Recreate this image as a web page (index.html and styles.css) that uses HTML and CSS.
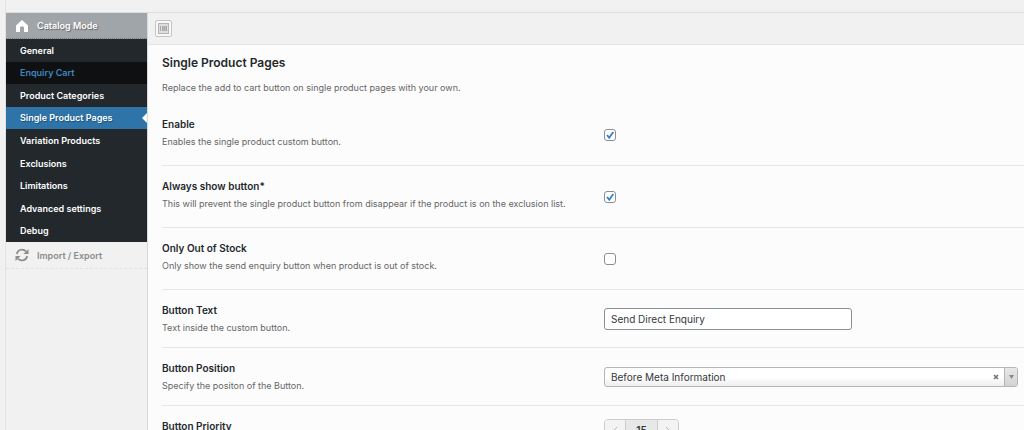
FILE: index.html
```html
<!DOCTYPE html>
<html lang="en">
<head>
  <meta charset="UTF-8" />
  <meta name="viewport" content="width=device-width, initial-scale=1" />
  <title>Catalog Mode - Single Product Pages</title>
  <link rel="stylesheet" href="styles.css">
</head>
<body>
  <div class="panel">
    <nav class="sidebar">
      <a href="#catalog" class="menu-head">
        <svg class="icon" viewBox="0 0 14 14" aria-hidden="true">
          <path fill="currentColor" d="M7 1 13 6.5V13H9V8.5Q9 7.5 8 7.5H6Q5 7.5 5 8.5V13H1V6.5Z" />
        </svg>
        <span>Catalog Mode</span>
      </a>
      <ul class="submenu">
        <li><a href="#general">General</a></li>
        <li><a href="#enquiry" class="hovered">Enquiry Cart</a></li>
        <li><a href="#categories">Product Categories</a></li>
        <li><a href="#single" class="current">Single Product Pages</a></li>
        <li><a href="#variation">Variation Products</a></li>
        <li><a href="#exclusions">Exclusions</a></li>
        <li><a href="#limitations">Limitations</a></li>
        <li><a href="#advanced">Advanced settings</a></li>
        <li><a href="#debug">Debug</a></li>
      </ul>
      <a href="#import" class="menu-import">
        <svg class="icon" viewBox="0 0 14 14" aria-hidden="true">
          <path fill="none" stroke="currentColor" stroke-width="1.7" d="M1.8 6A5.3 5.3 0 0 1 11 3.4M12.2 8A5.3 5.3 0 0 1 3 10.6" />
          <path fill="currentColor" d="M13.5 1V6H8.5ZM.5 13V8H5.5Z" />
        </svg>
        <span>Import / Export</span>
      </a>
    </nav>

    <main class="main">
      <div class="toolbar">
        <button type="button" class="expand" aria-label="Expand options">
          <svg viewBox="0 0 11 11" aria-hidden="true">
            <rect x=".5" y=".5" width="10" height="10" fill="#ddd" stroke="#b5b5b5" />
            <path d="M2 3h1v5H2zM4 3h5v5H4z" fill="#aaa" />
            <path d="M5.5 3v5M7.5 3v5" stroke="#bbb" />
          </svg>
        </button>
      </div>

      <form class="options">
        <h2>Single Product Pages</h2>
        <p class="intro">Replace the add to cart button on single product pages with your own.</p>

        <div class="row row-check">
          <div class="info">
            <label for="enable">Enable</label>
            <p>Enables the single product custom button.</p>
          </div>
          <div class="field"><input type="checkbox" id="enable" checked /></div>
        </div>

        <div class="row row-check">
          <div class="info">
            <label for="always">Always show button*</label>
            <p>This will prevent the single product button from disappear if the product is on the exclusion list.</p>
          </div>
          <div class="field"><input type="checkbox" id="always" checked /></div>
        </div>

        <div class="row row-check">
          <div class="info">
            <label for="stock">Only Out of Stock</label>
            <p>Only show the send enquiry button when product is out of stock.</p>
          </div>
          <div class="field"><input type="checkbox" id="stock" /></div>
        </div>

        <div class="row">
          <div class="info">
            <label for="text">Button Text</label>
            <p>Text inside the custom button.</p>
          </div>
          <div class="field"><input type="text" id="text" value="Send Direct Enquiry" /></div>
        </div>

        <div class="row">
          <div class="info">
            <label for="position">Button Position</label>
            <p>Specify the positon of the Button.</p>
          </div>
          <div class="field">
            <div class="select">
              <select id="position">
                <option>Before Meta Information</option>
              </select>
              <button type="button" class="clear" aria-label="Clear">
                <svg viewBox="0 0 6 6" aria-hidden="true"><path d="M1 1 5 5M5 1 1 5" stroke="#777" stroke-width="1.7" /></svg>
              </button>
              <span class="arrow">
                <svg viewBox="0 0 5 4" aria-hidden="true"><path d="M0 0H5L2.5 4Z" fill="#888" /></svg>
              </span>
            </div>
          </div>
        </div>

        <div class="row">
          <div class="info">
            <label for="priority">Button Priority</label>
          </div>
          <div class="field field-top">
            <div class="spinner">
              <button type="button" aria-label="Decrease">
                <svg viewBox="0 0 6 8" aria-hidden="true"><path d="M5 1 2 4 5 7" fill="none" stroke="#bbb" /></svg>
              </button>
              <input type="text" id="priority" value="15" />
              <button type="button" aria-label="Increase">
                <svg viewBox="0 0 6 8" aria-hidden="true"><path d="M1 1 4 4 1 7" fill="none" stroke="#bbb" /></svg>
              </button>
            </div>
          </div>
        </div>
      </form>
    </main>
  </div>
</body>
</html>
```
FILE: styles.css
```css
* {
  box-sizing: border-box;
}

body {
  margin: 0;
  height: 100vh;
  overflow: hidden;
  padding-left: 5px;
  background: #f1f1f1;
  font-family: Inter, "Liberation Sans", sans-serif;
  font-size: 9px;
  color: #23282d;
}

.panel {
  display: flex;
  min-height: 100vh;
  padding-top: 12px;
  border-left: 1px solid #e2e2e2;
}

a {
  text-decoration: none;
}

/* Sidebar */
.sidebar {
  width: 141px;
  flex-shrink: 0;
  border-top: 1px solid #dedede;
}

.menu-head,
.menu-import {
  display: flex;
  align-items: center;
  gap: 8px;
  height: 27px;
  padding-left: 9px;
  font-weight: 600;
}

.menu-head {
  height: 26px;
  background: #a0a5aa;
  border-bottom: 1px dotted #777;
  color: #fff;
  text-shadow: 1px 1px 1px #666;
}

.menu-import {
  color: #8c8c8c;
  border-bottom: 1px dashed #e2e2e2;
}

.icon {
  width: 14px;
  height: 14px;
}

.submenu {
  display: grid;
  grid-auto-rows: 1fr;
  min-height: 203px;
  margin: 0;
  padding: 0;
  list-style: none;
  background: #23282d;
}

.submenu a {
  position: relative;
  display: flex;
  align-items: center;
  height: 100%;
  padding-left: 14px;
  color: #fff;
  font-weight: 600;
}

.submenu .hovered {
  background: #0e1012;
  color: #3f88c0;
}

.submenu .current {
  background: #2e74a9;
  text-shadow: 1px 1px 1px #1a4f78;
}

.submenu .current::after {
  content: "";
  position: absolute;
  right: 0;
  border: 5px solid transparent;
  border-left-width: 0;
  border-right-color: #fcfcfc;
}

/* Content */
.main {
  flex: 1;
  min-width: 0;
  background: #fcfcfc;
  border-top: 1px solid #dedede;
  border-left: 1px solid #d8d8d8;
}

.toolbar {
  display: flex;
  align-items: center;
  height: 32px;
  padding-left: 7px;
  background: #f1f1f1;
  border-bottom: 1px solid #e5e5e5;
}

.expand {
  display: flex;
  align-items: center;
  justify-content: center;
  width: 17px;
  height: 17px;
  padding: 0;
  background: #f8f8f8;
  border: 1px solid #c5c5c5;
  border-radius: 2px;
}

.expand svg {
  width: 11px;
  height: 11px;
}

.options {
  padding: 10px 0 0 14px;
}

h2 {
  margin: 0;
  font-size: 12px;
  line-height: 16px;
  font-weight: 600;
}

.intro {
  margin: 11px 0 10px;
  line-height: 12px;
  color: #666;
}

.row {
  display: grid;
  grid-template-columns: 442px 1fr;
  padding: 13px 0;
  border-bottom: 1px solid #e7e7e7;
}

.info label {
  display: block;
  font-size: 10px;
  line-height: 14px;
  font-weight: 600;
}

.info p {
  margin: 5px 0 0;
  line-height: 12px;
  color: #666;
}

.field {
  display: flex;
  align-items: center;
  height: 31px;
  padding-right: 6px;
}

.row-check .field {
  height: 35px;
}

.field-top {
  align-items: flex-start;
}

input,
select {
  font-family: inherit;
  font-size: 10px;
  color: #32373c;
}

input[type="checkbox"] {
  appearance: none;
  width: 12px;
  height: 12px;
  margin: 0;
  background: #fff;
  border: 1px solid #8c8f94;
  border-radius: 3px;
}

input[type="checkbox"]:checked {
  background: #fff url("data:image/svg+xml,%3Csvg xmlns='http://www.w3.org/2000/svg' viewBox='0 0 10 10'%3E%3Cpath d='M2 5 4.2 7.7 8.3 2' fill='none' stroke='%233582c4' stroke-width='1.8'/%3E%3C/svg%3E") center / 10px 10px no-repeat;
}

.field > input[type="text"] {
  width: 248px;
  height: 22px;
  padding: 0 6px;
  background: #fff;
  border: 1px solid #8c8f94;
  border-radius: 3px;
}

.select {
  position: relative;
  flex: 1;
  display: flex;
}

select {
  appearance: none;
  width: 100%;
  height: 20px;
  padding: 0 36px 0 6px;
  background: linear-gradient(#fff 50%, #eee);
  border: 1px solid #b5b5b5;
  border-radius: 3px;
}

.clear,
.arrow {
  position: absolute;
  top: 1px;
  bottom: 1px;
  display: flex;
  align-items: center;
  justify-content: center;
}

.clear {
  right: 16px;
  width: 12px;
  padding: 0;
  background: none;
  border: 0;
}

.clear svg {
  width: 6px;
  height: 6px;
}

.arrow {
  right: 1px;
  width: 13px;
  background: linear-gradient(#e8e8e8, #d2d2d2);
  border-left: 1px solid #b5b5b5;
  border-radius: 0 2px 2px 0;
  pointer-events: none;
}

.arrow svg {
  width: 5px;
  height: 4px;
}

.spinner {
  display: flex;
  height: 22px;
  border: 1px solid #ccc;
  border-radius: 4px;
  overflow: hidden;
}

.spinner button {
  display: flex;
  align-items: center;
  justify-content: center;
  width: 20px;
  padding: 0;
  background: #f3f3f3;
  border: 0;
}

.spinner svg {
  width: 6px;
  height: 8px;
}

.spinner input {
  width: 33px;
  padding: 0;
  background: #e8e8e8;
  border: 1px solid #ccc;
  border-width: 0 1px;
  font-weight: 600;
  text-align: center;
}
```
